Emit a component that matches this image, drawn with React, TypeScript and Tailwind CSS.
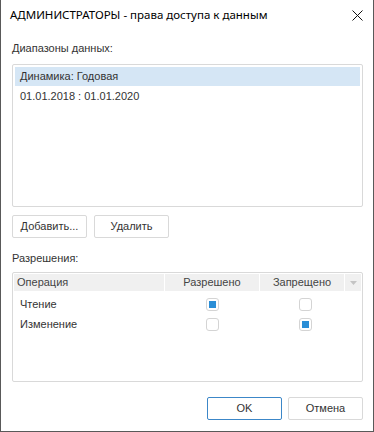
import React from 'react';

const ui = { fontFamily: '"Liberation Sans", Arial, sans-serif' };
const title = { fontFamily: '"Noto Sans", "Open Sans", sans-serif' };

function Check({ on }: { on?: boolean }) {
  return (
    <div className="w-[13px] h-[13px] rounded-[3px] border border-[#d4d4d4] bg-white flex items-center justify-center">
      {on && <div className="w-[7px] h-[7px] bg-[#2b8ed6]" />}
    </div>
  );
}

function Btn({ children, focus }: { children: React.ReactNode; focus?: boolean }) {
  return (
    <button
      className={`w-[75px] h-[23px] rounded-[2px] bg-white text-[11px] text-[#333] border ${
        focus ? 'border-[#3c87c8]' : 'border-[#d9d9d9]'
      }`}
      style={ui}
    >
      {children}
    </button>
  );
}

export default function App() {
  const rows = [
    { name: 'Чтение', allow: true, deny: false },
    { name: 'Изменение', allow: false, deny: true },
  ];

  return (
    <div className="w-[374px] h-[432px] bg-white border-x border-b border-[#595959] flex flex-col" style={ui}>
      {/* Title bar */}
      <div className="h-[30px] flex items-center justify-between pl-[9px] pr-[9px]">
        <span className="text-[11.5px] text-black" style={title}>
          АДМИНИСТРАТОРЫ - права доступа к данным
        </span>
        <svg width="11" height="11" viewBox="0 0 11 11" className="mr-[1px]">
          <path d="M0.5 0.5 L10.5 10.5 M10.5 0.5 L0.5 10.5" stroke="#111" strokeWidth="1" />
        </svg>
      </div>

      <div className="pl-[11px] pr-[10px] flex flex-col">
        <div className="mt-[11px] h-[14px] leading-[14px] text-[11px] text-[#333]">Диапазоны данных:</div>

        {/* Ranges list */}
        <div className="mt-[9px] h-[143px] border border-[#d9d9d9] rounded-[2px] p-[2px] flex flex-col">
          <div className="h-[19px] bg-[#d5e6f5] flex items-center pl-[5px] text-[11px] text-[#333]">
            Динамика: Годовая
          </div>
          <div className="h-[20px] flex items-center pl-[5px] text-[11px] text-[#333]">
            01.01.2018 : 01.01.2020
          </div>
        </div>

        <div className="mt-[8px] flex gap-[7px]">
          <Btn>Добавить...</Btn>
          <Btn>Удалить</Btn>
        </div>

        <div className="mt-[13px] h-[14px] leading-[14px] text-[11px] text-[#333]">Разрешения:</div>

        {/* Permissions table */}
        <div className="mt-[7px] h-[110px] border border-[#d9d9d9] rounded-[2px] p-px flex flex-col">
          <div className="h-[17px] flex gap-px text-[11px] text-[#444]">
            <div className="w-[150px] bg-[#f0f0f0] flex items-center pl-[3px]">Операция</div>
            <div className="w-[94px] bg-[#f0f0f0] flex items-center justify-center">Разрешено</div>
            <div className="w-[84px] bg-[#f0f0f0] flex items-center justify-center">Запрещено</div>
            <div className="flex-1 bg-[#f0f0f0] flex items-center justify-center">
              <svg width="7" height="4" viewBox="0 0 7 4">
                <path d="M0 0 H7 L3.5 4 Z" fill="#c4c4c4" />
              </svg>
            </div>
          </div>
          <div className="mt-[3px] flex flex-col">
            {rows.map((r) => (
              <div key={r.name} className="h-[20px] flex items-center text-[11px] text-[#333]">
                <div className="w-[151px] pl-[6px]">{r.name}</div>
                <div className="w-[95px] flex justify-center">
                  <Check on={r.allow} />
                </div>
                <div className="w-[85px] flex justify-center pl-[6px]">
                  <Check on={r.deny} />
                </div>
              </div>
            ))}
          </div>
        </div>

        <div className="mt-[15px] flex justify-end gap-[6px]">
          <Btn focus>OK</Btn>
          <Btn>Отмена</Btn>
        </div>
      </div>
    </div>
  );
}
